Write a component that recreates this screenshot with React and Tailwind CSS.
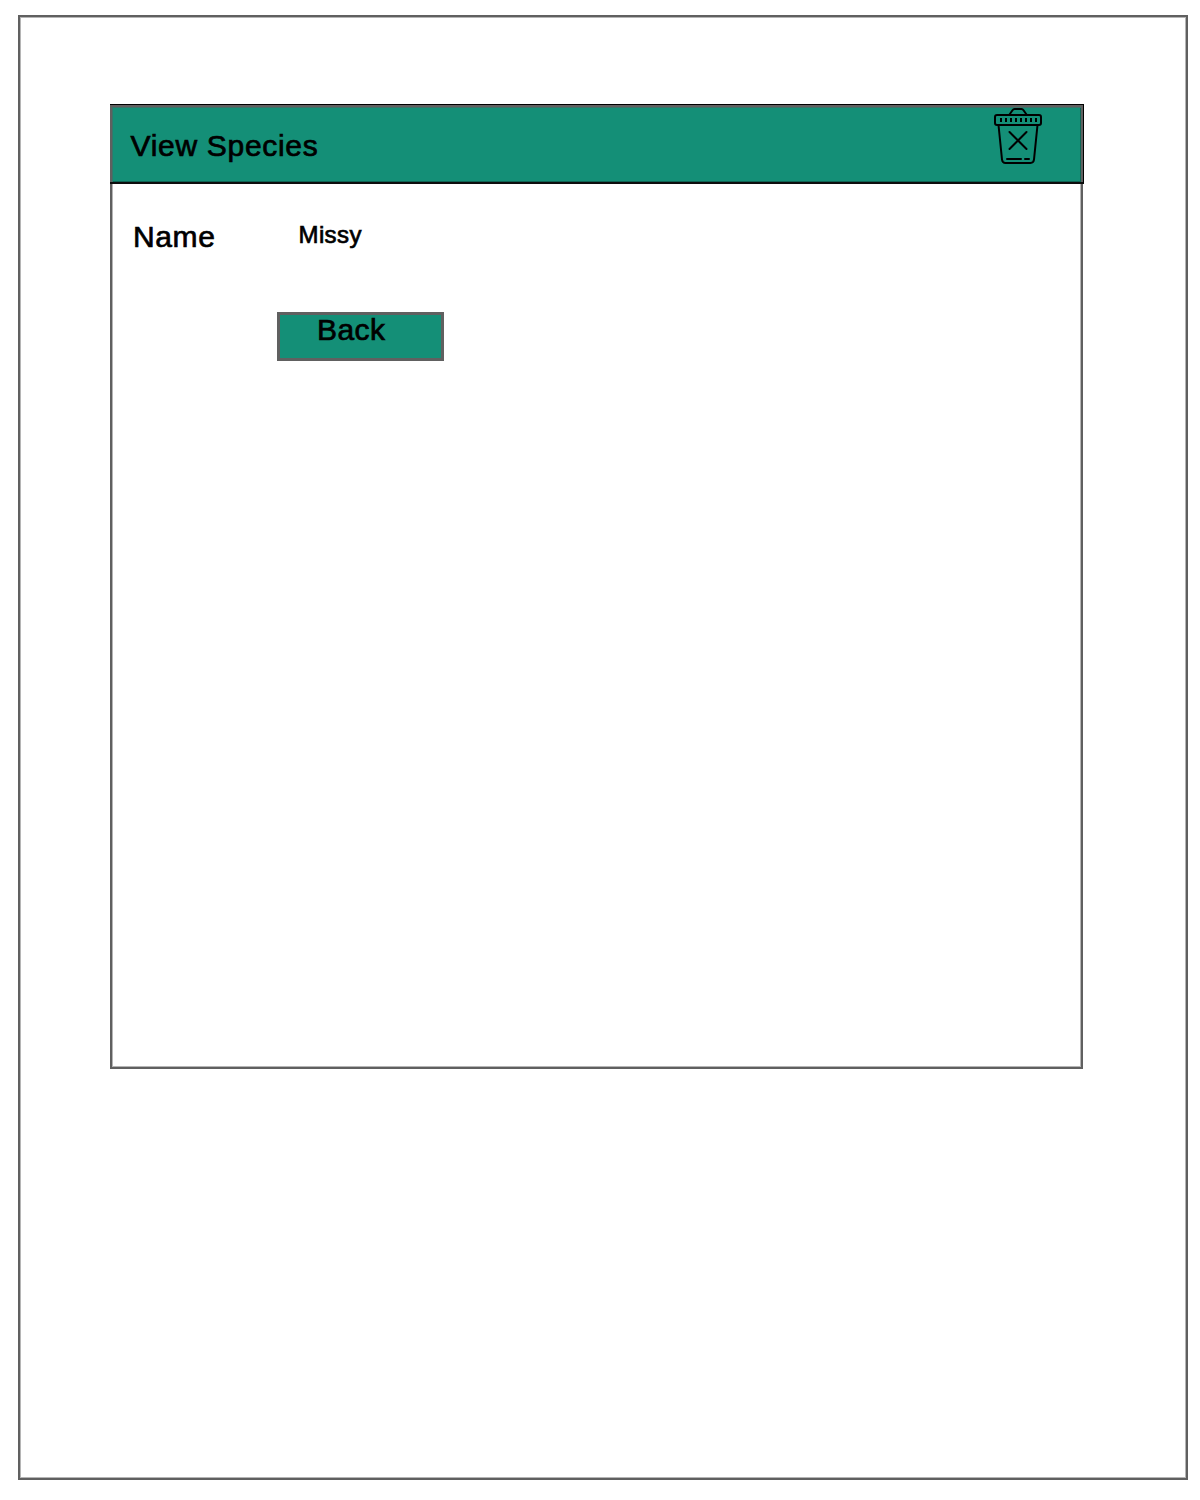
function TrashIcon() {
  return (
    <svg className="block h-[58px] w-[50px]" viewBox="0 0 50 58" fill="none" stroke="#000" strokeWidth="2" strokeLinejoin="round" strokeLinecap="round">
      <path d="M16.500 7.500 19.500 3.200Q20.300 2 21.500 2h7q1.200 0 2 1.200L33.500 7.500" />
      <rect x="2" y="8" width="46" height="10" rx="2" />
      <path d="M5.500 18 9 52.500Q9.400 56 12.500 56h25q3.100 0 3.500-3.500L44.500 18" />
      <path d="M8 11v4M13 11v4M18 11v4M23 11v4M28 11v4M33 11v4M38 11v4M43 11v4" strokeLinecap="butt" />
      <path d="M16.500 25 33.500 42M33.500 25 16.500 42" />
      <path d="M14 52h14M32 52h4" />
    </svg>
  );
}

export default function App() {
  return (
    <div className="h-[1500px] w-[1200px] bg-white pt-[15px] pl-[18px] font-['Liberation_Sans',Arial,sans-serif] text-black [-webkit-text-stroke:0.7px_black]">
      <main className="h-[1465px] w-[1170px] border-2 border-[#606060] pt-[87px] pl-[90px] shadow-[inset_0_0_0_1px_#b5b5b5]">
        <section className="flex h-[965px] w-[974px] flex-col">
          <header className="flex h-20 shrink-0 justify-between border-t border-r border-b-2 border-black border-b-[#0d0d0d] bg-[#148f77] shadow-[inset_2px_2px_0_#606060,inset_-2px_0_0_#606060,inset_3px_3px_0_#3b746a,inset_-3px_-1px_0_#0e6454]">
            <h1 className="pt-[23px] pl-[20.5px] text-[30px] leading-9 tracking-[0.7px]">View Species</h1>
            <div className="pt-[2px] pr-[40px]">
              <TrashIcon />
            </div>
          </header>
          <div className="w-[973px] grow border-2 border-t-0 border-[#606060] pt-[35px] pl-[21px] shadow-[inset_1px_-1px_0_#b5b5b5,inset_-1px_0_0_#b5b5b5]">
            <div className="flex">
              <span className="w-[165.5px] text-[30px] leading-9 tracking-[0.6px]">Name</span>
              <span className="text-[24px] leading-[31px] tracking-[0.4px]">Missy</span>
            </div>
            <button className="mt-[57px] ml-[144px] flex h-[49px] w-[167px] border-2 border-[#606060] bg-[#148f77] pl-[38px] text-[30px] leading-[31px] tracking-[0.4px] shadow-[inset_0_0_0_1px_#606060]">
              Back
            </button>
          </div>
        </section>
      </main>
    </div>
  );
}
